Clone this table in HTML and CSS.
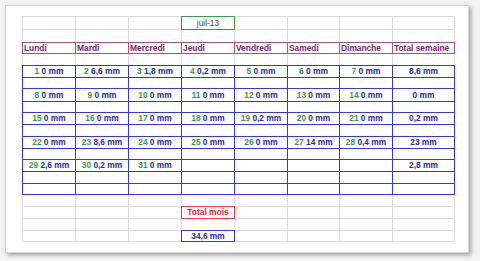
FILE: index.html
```html
<!DOCTYPE html>
<html lang="fr">
<head>
<meta charset="utf-8">
<title>Pluie juillet 2013</title>
<link rel="stylesheet" href="styles.css">
</head>
<body>
<div class="card">
  <div class="sheet">
    <!-- row 0 -->
    <div class="c"></div><div class="c"></div><div class="c"></div><div class="c f green date">juil-13</div><div class="c"></div><div class="c"></div><div class="c"></div><div class="c"></div>
    <!-- row 1 -->
    <div class="c"></div><div class="c"></div><div class="c"></div><div class="c"></div><div class="c"></div><div class="c"></div><div class="c"></div><div class="c"></div>
    <!-- row 2 header -->
    <div class="c f purple h">Lundi</div><div class="c f purple h">Mardi</div><div class="c f purple h">Mercredi</div><div class="c f purple h">Jeudi</div><div class="c f purple h">Vendredi</div><div class="c f purple h">Samedi</div><div class="c f purple h">Dimanche</div><div class="c f purple h">Total semaine</div>
    <!-- row 3 -->
    <div class="c"></div><div class="c"></div><div class="c"></div><div class="c"></div><div class="c"></div><div class="c"></div><div class="c"></div><div class="c"></div>
    <!-- row 4 week 1 -->
    <div class="c f blue d"><span class="n">1</span>&nbsp;0 mm</div><div class="c f blue d"><span class="n">2</span>&nbsp;6,6 mm</div><div class="c f blue d"><span class="n">3</span>&nbsp;1,8 mm</div><div class="c f blue d"><span class="n">4</span>&nbsp;0,2 mm</div><div class="c f blue d"><span class="n">5</span>&nbsp;0 mm</div><div class="c f blue d"><span class="n">6</span>&nbsp;0 mm</div><div class="c f blue d"><span class="n">7</span>&nbsp;0 mm</div><div class="c f blue d t">8,6 mm</div>
    <!-- row 5 -->
    <div class="c f blue"></div><div class="c f blue"></div><div class="c f blue"></div><div class="c f blue"></div><div class="c f blue"></div><div class="c f blue"></div><div class="c f blue"></div><div class="c f blue"></div>
    <!-- row 6 week 2 -->
    <div class="c f blue d"><span class="n">8</span>&nbsp;0 mm</div><div class="c f blue d"><span class="n">9</span>&nbsp;0 mm</div><div class="c f blue d"><span class="n">10</span>&nbsp;0 mm</div><div class="c f blue d"><span class="n">11</span>&nbsp;0 mm</div><div class="c f blue d"><span class="n">12</span>&nbsp;0 mm</div><div class="c f blue d"><span class="n">13</span>&nbsp;0 mm</div><div class="c f blue d"><span class="n">14</span>&nbsp;0 mm</div><div class="c f blue d t">0 mm</div>
    <!-- row 7 -->
    <div class="c f blue"></div><div class="c f blue"></div><div class="c f blue"></div><div class="c f blue"></div><div class="c f blue"></div><div class="c f blue"></div><div class="c f blue"></div><div class="c f blue"></div>
    <!-- row 8 week 3 -->
    <div class="c f blue d"><span class="n">15</span>&nbsp;0 mm</div><div class="c f blue d"><span class="n">16</span>&nbsp;0 mm</div><div class="c f blue d"><span class="n">17</span>&nbsp;0 mm</div><div class="c f blue d"><span class="n">18</span>&nbsp;0 mm</div><div class="c f blue d"><span class="n">19</span>&nbsp;0,2 mm</div><div class="c f blue d"><span class="n">20</span>&nbsp;0 mm</div><div class="c f blue d"><span class="n">21</span>&nbsp;0 mm</div><div class="c f blue d t">0,2 mm</div>
    <!-- row 9 -->
    <div class="c f blue"></div><div class="c f blue"></div><div class="c f blue"></div><div class="c f blue"></div><div class="c f blue"></div><div class="c f blue"></div><div class="c f blue"></div><div class="c f blue"></div>
    <!-- row 10 week 4 -->
    <div class="c f blue d"><span class="n">22</span>&nbsp;0 mm</div><div class="c f blue d"><span class="n">23</span>&nbsp;8,6 mm</div><div class="c f blue d"><span class="n">24</span>&nbsp;0 mm</div><div class="c f blue d"><span class="n">25</span>&nbsp;0 mm</div><div class="c f blue d"><span class="n">26</span>&nbsp;0 mm</div><div class="c f blue d"><span class="n">27</span>&nbsp;14 mm</div><div class="c f blue d"><span class="n">28</span>&nbsp;0,4 mm</div><div class="c f blue d t">23 mm</div>
    <!-- row 11 -->
    <div class="c f blue"></div><div class="c f blue"></div><div class="c f blue"></div><div class="c f blue"></div><div class="c f blue"></div><div class="c f blue"></div><div class="c f blue"></div><div class="c f blue"></div>
    <!-- row 12 week 5 -->
    <div class="c f blue d"><span class="n">29</span>&nbsp;2,6 mm</div><div class="c f blue d"><span class="n">30</span>&nbsp;0,2 mm</div><div class="c f blue d"><span class="n">31</span>&nbsp;0 mm</div><div class="c f blue d"></div><div class="c f blue d"></div><div class="c f blue d"></div><div class="c f blue d"></div><div class="c f blue d t">2,8 mm</div>
    <!-- row 13 -->
    <div class="c f blue"></div><div class="c f blue"></div><div class="c f blue"></div><div class="c f blue"></div><div class="c f blue"></div><div class="c f blue"></div><div class="c f blue"></div><div class="c f blue"></div>
    <!-- row 14 -->
    <div class="c f blue"></div><div class="c f blue"></div><div class="c f blue"></div><div class="c f blue"></div><div class="c f blue"></div><div class="c f blue"></div><div class="c f blue"></div><div class="c f blue"></div>
    <!-- row 15 -->
    <div class="c"></div><div class="c"></div><div class="c"></div><div class="c"></div><div class="c"></div><div class="c"></div><div class="c"></div><div class="c"></div>
    <!-- row 16 -->
    <div class="c"></div><div class="c"></div><div class="c"></div><div class="c f red d">Total mois</div><div class="c"></div><div class="c"></div><div class="c"></div><div class="c"></div>
    <!-- row 17 -->
    <div class="c"></div><div class="c"></div><div class="c"></div><div class="c"></div><div class="c"></div><div class="c"></div><div class="c"></div><div class="c"></div>
    <!-- row 18 -->
    <div class="c"></div><div class="c"></div><div class="c"></div><div class="c f blue d">34,6 mm</div><div class="c"></div><div class="c"></div><div class="c"></div><div class="c"></div>
  </div>
</div>
</body>
</html>
```

FILE: styles.css
```css
html, body {
  margin: 0;
  padding: 0;
}
body {
  background: #f3f3f3;
  width: 480px;
  height: 261px;
  overflow: hidden;
  font-family: "Liberation Sans", Arial, sans-serif;
}
.card {
  margin: 5px 0 0 5px;
  width: 464px;
  height: 248px;
  box-sizing: border-box;
  background: #ffffff;
  border: 1px solid #d6d6d6;
  box-shadow: 2px 2px 4px rgba(0, 0, 0, 0.35);
  padding: 10px 0 0 16px;
}
.sheet {
  display: grid;
  grid-template-columns: 53px 53px 53px 53px 53px 52px 53px 62px;
  grid-template-rows: 13px 13px 11px 12px 12px 11px 13px 11px 12px 12px 12px 11px 12px 12px 11px 12px 12px 12px 11px;
  width: 433px;
  box-sizing: border-box;
  border-top: 1px solid #dcdcdc;
  border-left: 1px solid #dcdcdc;
  font-size: 8.4px;
  line-height: 1;
}
.c {
  box-sizing: border-box;
  border-right: 1px solid #dcdcdc;
  border-bottom: 1px solid #dcdcdc;
  display: flex;
  align-items: center;
  white-space: nowrap;
  overflow: visible;
}
.f {
  border-right-color: var(--k);
  border-bottom-color: var(--k);
  box-shadow: 0 -1px 0 var(--k), -1px 0 0 var(--k), -1px -1px 0 var(--k);
}
.blue { --k: #3b3bbd; }
.purple { --k: #a3557f; }
.green { --k: #3d9a45; }
.red { --k: #e0474c; }

.h {
  color: #7b1f73;
  font-weight: bold;
  padding-left: 1px;
}
.d {
  justify-content: center;
  font-weight: bold;
  color: #2b2b9c;
}
.red.d {
  color: #d9262c;
}
.n {
  color: #3a9a3a;
}
.date {
  justify-content: center;
  color: #4a4a4a;
}
```
